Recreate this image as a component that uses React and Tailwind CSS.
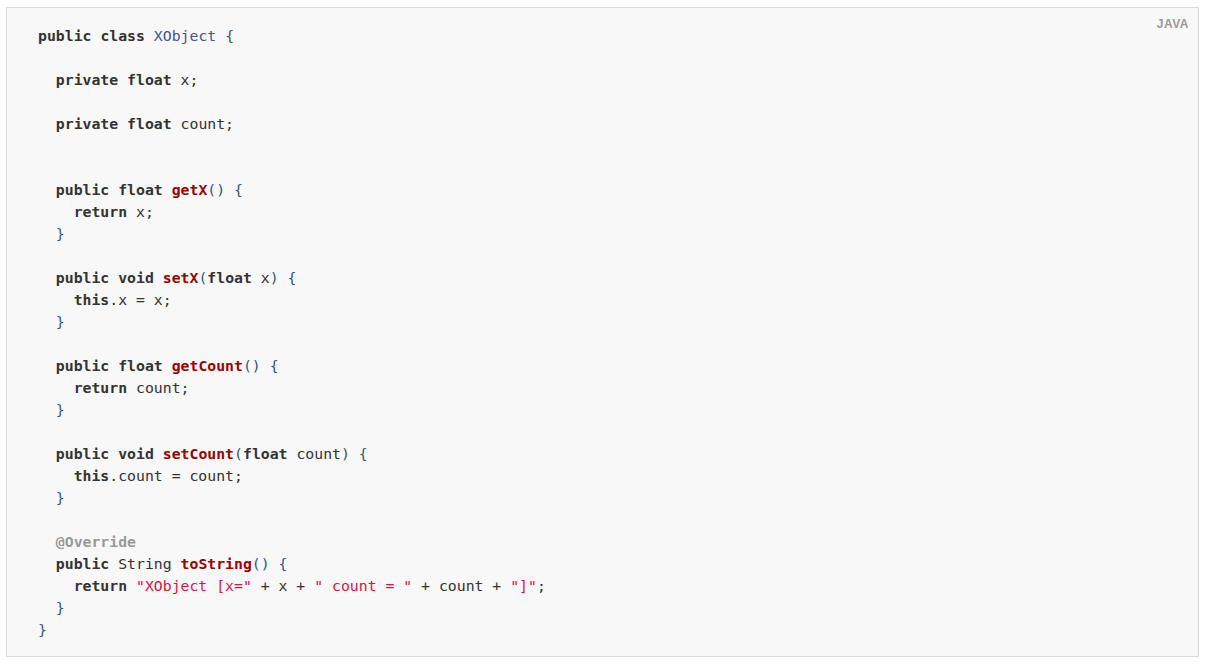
import React from "react";

// token helpers
const K = ({ children }) => <span className="font-bold text-[#333333]">{children}</span>;
const T = ({ children }) => <span className="text-[#445588]">{children}</span>;
const F = ({ children }) => <span className="font-bold text-[#990000]">{children}</span>;
const S = ({ children }) => <span className="text-[#dd1144]">{children}</span>;
const P = ({ children }) => <span className="text-[#34557a]">{children}</span>;
const M = ({ children }) => <span className="font-bold text-[#999999]">{children}</span>;

const lines = [
  <><K>public</K> <K>class</K> <T>XObject</T> <P>{"{"}</P></>,
  "",
  <>  <K>private</K> <K>float</K> x;</>,
  "",
  <>  <K>private</K> <K>float</K> count;</>,
  "",
  "",
  <>  <K>public</K> <K>float</K> <F>getX</F><P>()</P> <P>{"{"}</P></>,
  <>    <K>return</K> x;</>,
  <>  <P>{"}"}</P></>,
  "",
  <>  <K>public</K> <K>void</K> <F>setX</F><P>(</P><K>float</K> x<P>)</P> <P>{"{"}</P></>,
  <>    <K>this</K>.x = x;</>,
  <>  <P>{"}"}</P></>,
  "",
  <>  <K>public</K> <K>float</K> <F>getCount</F><P>()</P> <P>{"{"}</P></>,
  <>    <K>return</K> count;</>,
  <>  <P>{"}"}</P></>,
  "",
  <>  <K>public</K> <K>void</K> <F>setCount</F><P>(</P><K>float</K> count<P>)</P> <P>{"{"}</P></>,
  <>    <K>this</K>.count = count;</>,
  <>  <P>{"}"}</P></>,
  "",
  <>  <M>@Override</M></>,
  <>  <K>public</K> String <F>toString</F><P>()</P> <P>{"{"}</P></>,
  <>    <K>return</K> <S>"XObject [x="</S> + x + <S>" count = "</S> + count + <S>"]"</S>;</>,
  <>  <P>{"}"}</P></>,
  <><P>{"}"}</P></>,
];

export default function App() {
  return (
    <div className="w-[1206px] h-[664px] bg-white pt-[7px] pl-[6px] pr-[7px] pb-[7px]">
      <div className="relative h-full border border-[#dcdcdc] bg-[#f8f8f8] pl-[31px] pt-[17px]">
        <span className="absolute right-[9px] top-[7px] text-[12px] font-bold tracking-[0.5px] text-[#999999] font-['Liberation_Sans',sans-serif]">
          JAVA
        </span>
        <pre className="m-0 font-['DejaVu_Sans_Mono',monospace] text-[14.8px] leading-[22px] text-[#333333]">
          {lines.map((l, i) => (
            <div key={i} className="h-[22px] whitespace-pre">{l}</div>
          ))}
        </pre>
      </div>
    </div>
  );
}
